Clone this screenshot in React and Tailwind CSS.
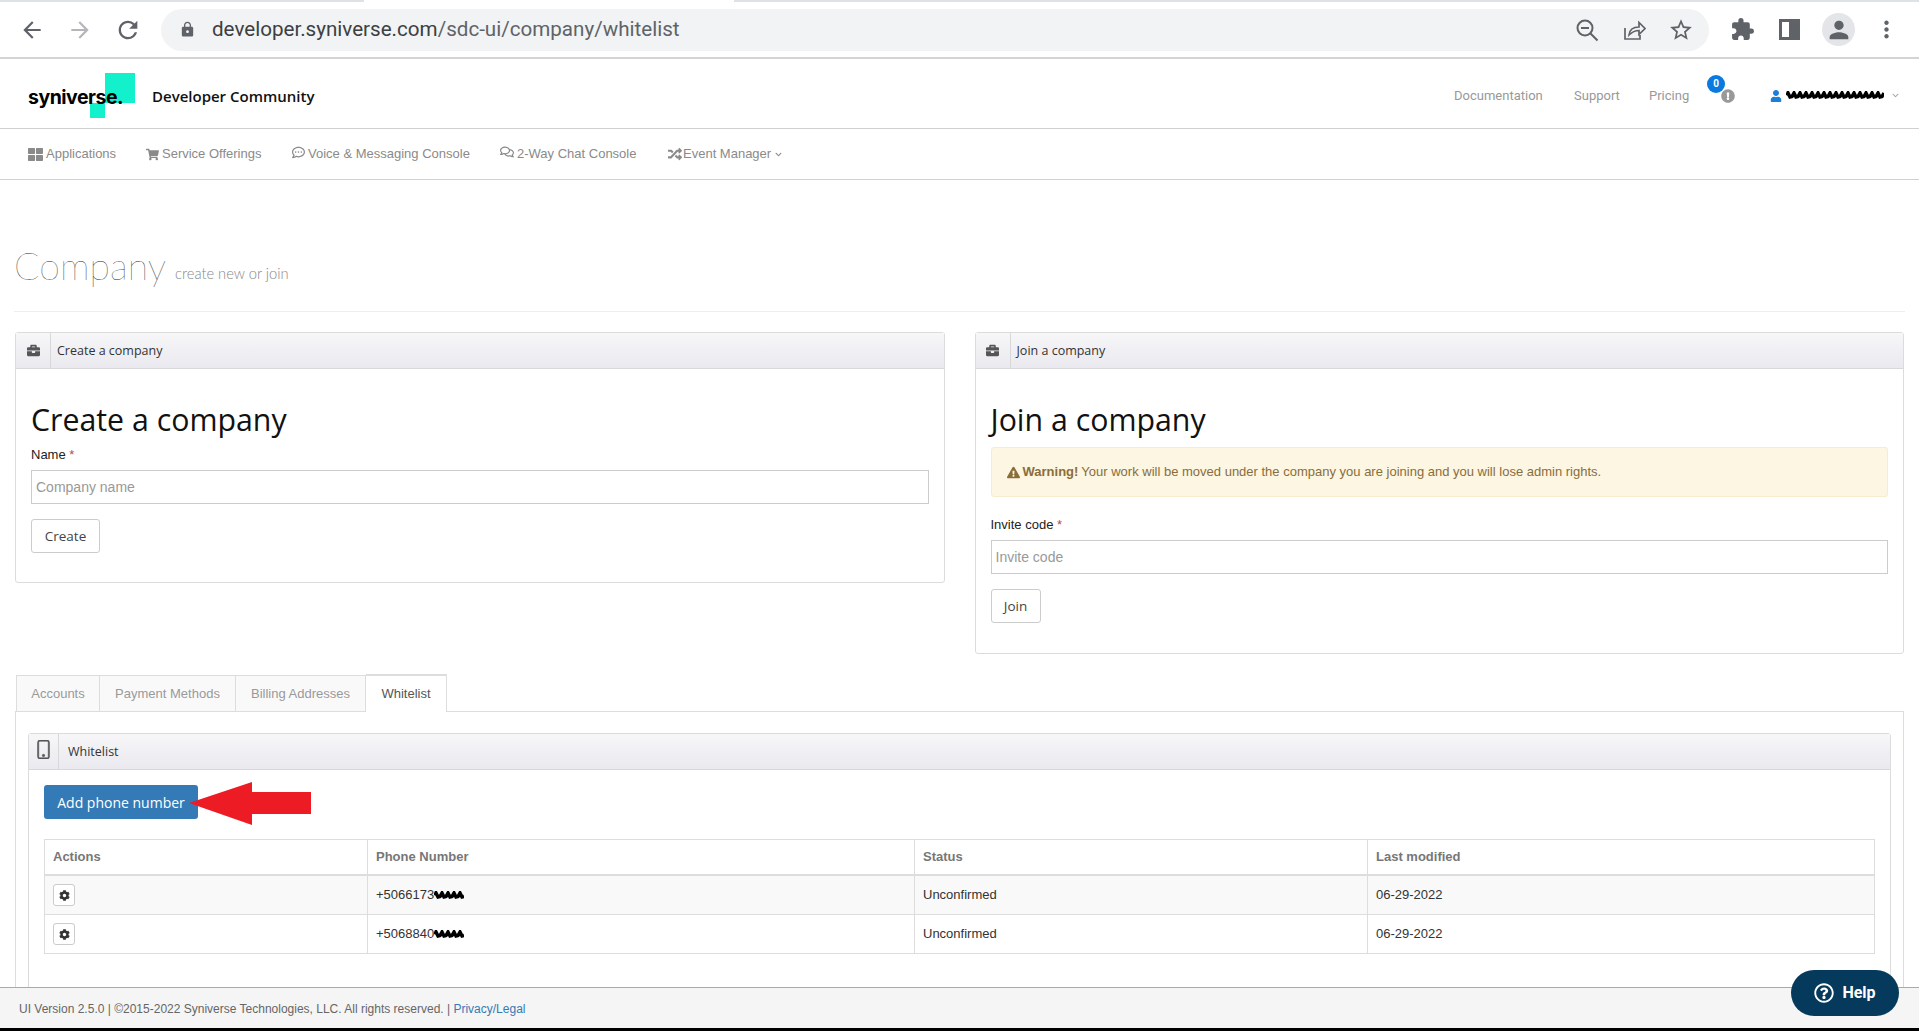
import React from 'react';
import { MdArrowBack, MdArrowForward, MdRefresh, MdLock, MdStarBorder, MdExtension, MdMoreVert, MdPerson } from 'react-icons/md';
import { FaBriefcase, FaCog, FaExclamationCircle, FaExclamationTriangle, FaRandom, FaRegCommentDots, FaRegComments, FaShoppingCart, FaThLarge, FaUser, FaChevronDown, FaRegQuestionCircle } from 'react-icons/fa';
import { BsPhone } from 'react-icons/bs';

// the black marker over private text in the screenshot
const Scribble = ({ width, height = 10 }) => (
    <svg width={width} height={height} viewBox={`0 0 ${width} ${height}`} className="block">
        <path
            d={`M1 ${height / 2} ${Array.from({ length: Math.floor(width / 2) }, (_, i) => `L${i * 2 + 2} ${i % 3 === 0 ? 2 : i % 3 === 1 ? height - 3 : height / 2 + 1}`).join(' ')}`}
            stroke="#000"
            strokeWidth="3.5"
            fill="none"
        />
    </svg>
);

const ChromeBar = () => (
    <div className="shrink-0 border-b-2 border-[#d4d4d4] bg-white">
        <div className="flex h-[2px] bg-[#dee1e6]">
            <div className="ml-[364px] w-[370px] bg-white"></div>
        </div>
        <div className="flex h-[55px] items-center pl-[19px]">
            <MdArrowBack className="text-[26px] text-[#5f6368]" />
            <MdArrowForward className="ml-[22px] text-[26px] text-[#b4b6b9]" />
            <MdRefresh className="ml-[21px] text-[28px] text-[#5f6368]" />
            <div className="ml-[19px] flex h-[42px] w-[1548px] items-center rounded-full bg-[#f1f3f4] pl-[18px] pr-[15px]">
                <MdLock className="text-[17px] text-[#5f6368]" />
                <span className="ml-[16px] text-[20.6px] text-[#3c4043] font-['Roboto',sans-serif]">developer.syniverse.com<span className="text-[#5f6368]">/sdc-ui/company/whitelist</span></span>
                <div className="ml-auto flex items-center gap-[22px] text-[#5f6368]">
                    <svg width="26" height="26" viewBox="0 0 26 26" fill="none" stroke="currentColor" strokeWidth="2">
                        <circle cx="11" cy="11" r="7.500" />
                        <path d="M7 11h8M16.500 16.500l7 7" />
                    </svg>
                    <svg width="24" height="24" viewBox="0 0 24 24" fill="none" stroke="currentColor" strokeWidth="1.7">
                        <path d="M3 10v11h15v-4" />
                        <path d="M7 17c.5-5 4-8 10-8V4.500l6 6-6 6V12.500c-4 0-7 1.500-10 4.500z" />
                    </svg>
                    <MdStarBorder className="text-[26px]" />
                </div>
            </div>
            <MdExtension className="ml-[21px] text-[25px] text-[#5f6368]" />
            <div className="ml-[24px] flex h-[21px] w-[21px] justify-end border-[3px] border-[#5f6368]">
                <div className="h-full w-[8px] bg-[#5f6368]"></div>
            </div>
            <div className="ml-[22px] flex h-[33px] w-[33px] items-center justify-center rounded-full bg-[#e3e5e9]">
                <MdPerson className="text-[28px] text-[#5f6368]" />
            </div>
            <MdMoreVert className="ml-[18px] text-[27px] text-[#5f6368]" />
        </div>
    </div>
);

const Header = () => (
    <div className="flex h-[70px] shrink-0 items-center border-b border-[#d0d0d0] bg-white pl-[28px] pr-[20px] pt-[4px]">
        <div className="relative h-[45px] w-[107px]">
            <div className="absolute left-[77px] top-0 h-[30px] w-[30px] bg-[#12f0cc]"></div>
            <div className="absolute left-[62px] top-[30px] h-[15px] w-[15px] bg-[#12f0cc]"></div>
            <span className="absolute left-0 top-[11px] text-[19.5px] font-bold leading-[26px] tracking-[-0.5px] text-black font-['Inter',sans-serif]">syniverse.</span>
        </div>
        <span className="ml-[17px] mt-[2px] text-[15px] font-semibold text-[#111] font-['Open_Sans',sans-serif]">Developer Community</span>
        <div className="ml-auto flex items-center text-[13px] text-[#999] font-['Roboto',sans-serif]">
            <span className="w-[120px]">Documentation</span>
            <span className="w-[75px]">Support</span>
            <span className="w-[64px]">Pricing</span>
            <div className="relative mr-[41px] h-[16px] w-[16px]">
                <FaExclamationCircle className="absolute left-[8px] top-[1px] text-[14px] text-[#999]" />
                <span className="absolute left-[-6px] top-[-13px] flex h-[18px] w-[18px] items-center justify-center rounded-full bg-[#0b7ae0] text-[10px] font-bold text-white">0</span>
            </div>
            <FaUser className="text-[12px] text-[#1b7fd6]" />
            <div className="ml-[4px]"><Scribble width={98} height={9} /></div>
            <FaChevronDown className="ml-[8px] text-[7px] text-[#aaa]" />
        </div>
    </div>
);

const NavItem = ({ icon, label, suffix, width }) => (
    <div className={`flex items-center ${width}`}>
        {icon}
        <span>{label}</span>
        {suffix}
    </div>
);

const Nav = () => (
    <div className="flex h-[51px] shrink-0 items-center border-b border-[#d0d0d0] bg-white pl-[28px] text-[13px] text-[#8a8a8a] font-['Liberation_Sans',sans-serif]">
        <NavItem width="w-[118px]" icon={<FaThLarge className="mr-[3px] text-[15px]" />} label="Applications" />
        <NavItem width="w-[146px]" icon={<FaShoppingCart className="mr-[3px] text-[13px]" />} label="Service Offerings" />
        <NavItem width="w-[208px]" icon={<FaRegCommentDots className="mr-[3px] -translate-y-[2px] text-[13px]" />} label="Voice & Messaging Console" />
        <NavItem width="w-[168px]" icon={<FaRegComments className="mr-[3px] -translate-y-[2px] text-[14px]" />} label="2-Way Chat Console" />
        <NavItem icon={<FaRandom className="mr-[1px] text-[14px]" />} label="Event Manager" suffix={<FaChevronDown className="ml-[4px] text-[7px]" />} />
    </div>
);

const Panel = ({ icon, title, children, className, iconWidth = 'w-[35px]', titleGap = 'ml-[6px]' }) => (
    <div className={`rounded-[3px] border border-[#dcdcdc] bg-white ${className}`}>
        <div className="flex h-[36px] items-center border-b border-[#d8d8d8] bg-gradient-to-b from-[#f7f7f9] to-[#e9e9ef] text-[12.5px] text-[#333] font-['Open_Sans',sans-serif]">
            <div className={`flex h-full items-center justify-center border-r border-[#d8d8d8] text-[#555] ${iconWidth}`}>{icon}</div>
            <span className={`pt-[2px] ${titleGap}`}>{title}</span>
        </div>
        {children}
    </div>
);

const Field = ({ label, placeholder }) => (
    <div>
        <div className="text-[13px] leading-[16px] text-[#222] font-['Liberation_Sans',sans-serif]">
            {label} <span className="text-[#b94a48]">*</span>
        </div>
        <input
            placeholder={placeholder}
            className="mt-[7px] block h-[34px] w-full border border-[#ccc] px-[4px] text-[14px] placeholder:text-[#999] font-['Liberation_Sans',sans-serif]"
        />
    </div>
);

const OutlineButton = ({ children, className }) => (
    <button className={`mt-[15px] block h-[34px] rounded-[3px] border border-[#ccc] bg-white text-[13.5px] text-[#444] font-['Open_Sans',sans-serif] ${className}`}>
        {children}
    </button>
);

const PanelTitle = ({ children }) => (
    <h2 className="text-[30.3px] leading-[36px] text-[#111] font-['Open_Sans',sans-serif]">{children}</h2>
);

const Tabs = () => (
    <div className="relative z-10 -mb-px flex h-[38px] items-end pl-px text-[13px] text-[#999] font-['Liberation_Sans',sans-serif]">
        <div className="flex h-[37px] w-[84px] items-center justify-center border border-[#ddd] bg-[#f9f9f9]">Accounts</div>
        <div className="flex h-[37px] w-[136px] items-center justify-center border border-l-0 border-[#ddd] bg-[#f9f9f9]">Payment Methods</div>
        <div className="flex h-[37px] w-[130px] items-center justify-center border border-l-0 border-[#ddd] bg-[#f9f9f9]">Billing Addresses</div>
        <div className="flex h-[38px] w-[81px] items-center justify-center border border-b-0 border-l-0 border-t-2 border-[#ddd] bg-white text-[#555]">Whitelist</div>
    </div>
);

const rows = [
    { phone: '+5066173', blot: 30, status: 'Unconfirmed', modified: '06-29-2022' },
    { phone: '+5068840', blot: 30, status: 'Unconfirmed', modified: '06-29-2022' },
];

const Table = () => (
    <div className="mx-[15px] mt-[20px] border border-b-0 border-[#ddd] text-[13px] font-['Liberation_Sans',sans-serif]">
        <div className="grid h-[36px] grid-cols-[323px_547px_453px_1fr] items-center border-b-2 border-[#ddd] font-bold text-[#777]">
            <div className="flex h-full items-center border-r border-[#ddd] pl-[8px]">Actions</div>
            <div className="flex h-full items-center border-r border-[#ddd] pl-[8px]">Phone Number</div>
            <div className="flex h-full items-center border-r border-[#ddd] pl-[8px]">Status</div>
            <div className="pl-[8px]">Last modified</div>
        </div>
        {rows.map((row, i) => (
            <div key={row.phone} className={`grid h-[39px] grid-cols-[323px_547px_453px_1fr] items-center border-b border-[#ddd] text-[#333] ${i === 0 ? 'bg-[#f9f9f9]' : 'bg-white'}`}>
                <div className="flex h-full items-center border-r border-[#ddd] pl-[8px]">
                    <div className="flex h-[22px] w-[22px] items-center justify-center rounded-[3px] border border-[#ccc] bg-white text-[#333]">
                        <FaCog className="text-[11px]" />
                    </div>
                </div>
                <div className="flex h-full items-center border-r border-[#ddd] pl-[8px]">
                    {row.phone}
                    <Scribble width={row.blot} height={9} />
                </div>
                <div className="flex h-full items-center border-r border-[#ddd] pl-[8px]">{row.status}</div>
                <div className="pl-[8px]">{row.modified}</div>
            </div>
        ))}
    </div>
);

const App = () => {
    return (
        <div className="relative flex h-[1031px] flex-col overflow-hidden bg-white">
            <ChromeBar />
            <Header />
            <Nav />

            <div className="min-h-0 flex-1 overflow-hidden px-[15px]">
                {/*============== page title ========= */}
                <div className="-mx-px flex h-[132px] items-end border-b border-[#eee] pb-[20px]">
                    <h1 className="text-[37.5px] font-thin leading-[50px] text-[#222] font-['Lato',sans-serif]">Company</h1>
                    <span className="mb-[7px] ml-[9px] text-[14.7px] font-light text-[#888] font-['Lato',sans-serif]">create new or join</span>
                </div>

                {/*============== create and join ========= */}
                <div className="mt-[20px] grid grid-cols-2 items-start gap-[30px]">
                    <Panel title="Create a company" icon={<FaBriefcase className="text-[13px]" />}>
                        <div className="px-[15px] pb-[29px] pt-[33px]">
                            <PanelTitle>Create a company</PanelTitle>
                            <div className="mt-[9px]">
                                <Field label="Name" placeholder="Company name" />
                            </div>
                            <OutlineButton className="w-[69px]">Create</OutlineButton>
                        </div>
                    </Panel>
                    <Panel title="Join a company" icon={<FaBriefcase className="text-[13px]" />}>
                        <div className="px-[15px] pb-[30px] pt-[33px]">
                            <PanelTitle>Join a company</PanelTitle>
                            <div className="mt-[9px] flex h-[50px] items-center gap-[3px] rounded-[3px] border border-[#faebcc] bg-[#fcf6e2] pl-[15px] text-[13px] text-[#8a6d3b] font-['Liberation_Sans',sans-serif]">
                                <FaExclamationTriangle className="text-[13px]" />
                                <strong>Warning!</strong>
                                <span>Your work will be moved under the company you are joining and you will lose admin rights.</span>
                            </div>
                            <div className="mt-[20px]">
                                <Field label="Invite code" placeholder="Invite code" />
                            </div>
                            <OutlineButton className="w-[50px]">Join</OutlineButton>
                        </div>
                    </Panel>
                </div>

                {/*============== tabs ========= */}
                <div className="mt-[20px]">
                    <Tabs />
                    <div className="h-[400px] border border-[#ddd] px-[12px] pt-[21px]">
                        <Panel title="Whitelist" iconWidth="w-[30px]" titleGap="ml-[9px]" icon={<BsPhone className="-translate-y-[2px] text-[19px] stroke-[0.5px]" />} className="h-[300px]">
                            <div className="relative pt-[15px]">
                                <button className="ml-[15px] block h-[34px] w-[154px] rounded-[3px] bg-[#337ab7] text-[14px] text-white font-['Open_Sans',sans-serif]">
                                    Add phone number
                                </button>
                                {/* red arrow drawn over the screenshot */}
                                <svg width="122" height="44" viewBox="0 0 122 44" className="absolute left-[160px] top-[12px]">
                                    <path d="M0 21 L63 0 V10 H122 V32 H63 V43 Z" fill="#ed1c24" />
                                </svg>
                                <Table />
                            </div>
                        </Panel>
                    </div>
                </div>
            </div>

            {/*============== footer ========= */}
            <div className="flex h-[41px] shrink-0 items-center border-t border-[#aaa] bg-[#f5f5f5] pl-[19px] pt-[2px] text-[12px] text-[#666] font-['Liberation_Sans',sans-serif]">
                UI Version 2.5.0 | ©2015-2022 Syniverse Technologies, LLC. All rights reserved. |&nbsp;<span className="text-[#337ab7]">Privacy/Legal</span>
            </div>
            <div className="h-[3px] shrink-0 bg-black"></div>

            <div className="absolute bottom-[15px] right-[20px] flex h-[46px] w-[108px] items-center justify-center gap-[8px] rounded-full bg-[#063a5c] text-[16px] font-bold text-white font-['Roboto',sans-serif]">
                <FaRegQuestionCircle className="text-[20px]" />
                Help
            </div>
        </div>
    );
};

export default App;
